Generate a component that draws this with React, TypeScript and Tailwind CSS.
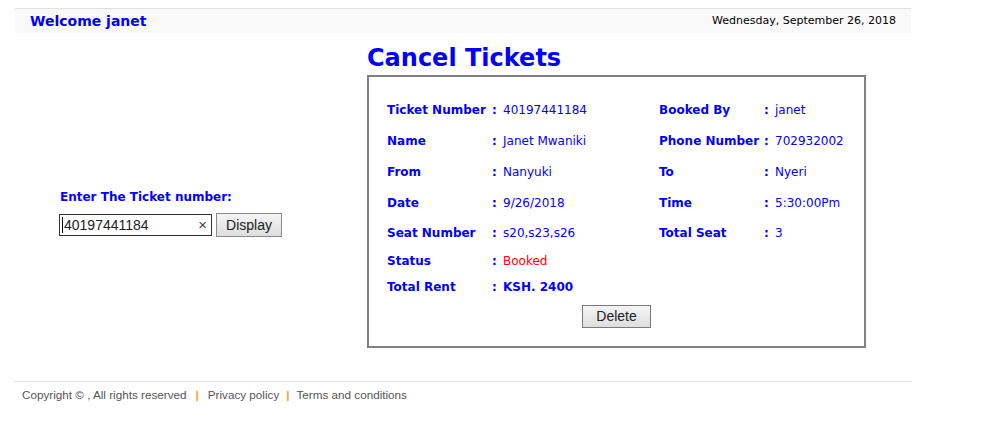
import type { ReactNode } from "react";

const verdana = { fontFamily: '"DejaVu Sans", Verdana, sans-serif' };

function Field({ label, value, valueClass = "" }: { label: string; value: ReactNode; valueClass?: string }) {
  return (
    <>
      <span className="w-[105px] whitespace-nowrap font-bold">{label}</span>
      <span className="w-[11px] font-bold">:</span>
      <span className={`whitespace-nowrap ${valueClass}`}>{value}</span>
    </>
  );
}

function Row({ h, left, right }: { h: string; left: ReactNode; right?: ReactNode }) {
  return (
    <div className={`flex items-center ${h}`}>
      <div className="flex w-[272px] items-center">{left}</div>
      <div className="flex items-center">{right}</div>
    </div>
  );
}

export default function App() {
  return (
    <div className="min-h-[421px] bg-white pt-2 text-[#0000ff]" style={verdana}>
      {/* header band */}
      <header className="ml-[15px] flex h-[25px] w-[896px] items-center justify-between border-t border-[#e0e0e0] bg-[#f9f9f9] pl-[15px] pr-[15px]">
        <span className="text-[14px] font-bold">Welcome janet</span>
        <span className="text-[11px] text-black">Wednesday, September 26, 2018</span>
      </header>

      <main className="flex">
        {/* ticket search */}
        <section className="w-[367px] pl-[59px] pt-[155px]">
          <div className="pl-px text-[12px] font-bold">Enter The Ticket number:</div>
          <div className="mt-[7px] flex items-center gap-[4px]" style={{ fontFamily: '"Liberation Sans", Arial, sans-serif' }}>
            <div className="flex h-[22px] w-[153px] items-center border border-[#333] pl-[2px] pr-[4px] text-[14px] text-[#222]">
              <span className="border-l border-black pl-px leading-[16px]">40197441184</span>
              <span className="ml-auto text-[15px] text-[#444]">×</span>
            </div>
            <button className="h-[24px] w-[66px] border border-[#8a8a8a] bg-gradient-to-b from-[#f4f4f4] to-[#dedede] text-[14px] text-[#222]">
              Display
            </button>
          </div>
        </section>

        {/* cancel panel */}
        <section>
          <h1 className="pt-[8px] text-[24px] font-bold leading-[34px]">Cancel Tickets</h1>
          <div className="h-[273px] w-[499px] border-2 border-[#808080] pl-[18px] pt-[17px] text-[12px]">
            <Row h="h-[31px]" left={<Field label="Ticket Number" value="40197441184" />} right={<Field label="Booked By" value="janet" />} />
            <Row h="h-[31px]" left={<Field label="Name" value="Janet Mwaniki" />} right={<Field label="Phone Number" value="702932002" />} />
            <Row h="h-[31px]" left={<Field label="From" value="Nanyuki" />} right={<Field label="To" value="Nyeri" />} />
            <Row h="h-[31px]" left={<Field label="Date" value="9/26/2018" />} right={<Field label="Time" value="5:30:00Pm" />} />
            <Row h="h-[30px]" left={<Field label="Seat Number" value="s20,s23,s26" />} right={<Field label="Total Seat" value="3" />} />
            <Row h="h-[26px]" left={<Field label="Status" value="Booked" valueClass="text-[#ff0000]" />} />
            <Row h="h-[26px]" left={<Field label="Total Rent" value="KSH. 2400" valueClass="font-bold" />} />
            <div className="mt-[5px] flex justify-center pr-[18px]">
              <button
                className="h-[23px] w-[69px] border border-[#7a7a7a] bg-gradient-to-b from-[#f4f4f4] to-[#dedede] text-[14px] text-[#222]"
                style={{ fontFamily: '"Liberation Sans", Arial, sans-serif' }}
              >
                Delete
              </button>
            </div>
          </div>
        </section>
      </main>

      {/* footer */}
      <footer
        className="ml-[13px] mt-[33px] flex w-[899px] items-center border-t border-[#e5e5e5] pl-[9px] pt-[4px] text-[11.7px] text-[#555]"
        style={{ fontFamily: '"Liberation Sans", Tahoma, sans-serif' }}
      >
        <span>Copyright © , All rights reserved</span>
        <span className="mx-[9px] font-bold text-[#f5a030]">|</span>
        <span>Privacy policy</span>
        <span className="mx-[7px] font-bold text-[#f5a030]">|</span>
        <span>Terms and conditions</span>
      </footer>
    </div>
  );
}
